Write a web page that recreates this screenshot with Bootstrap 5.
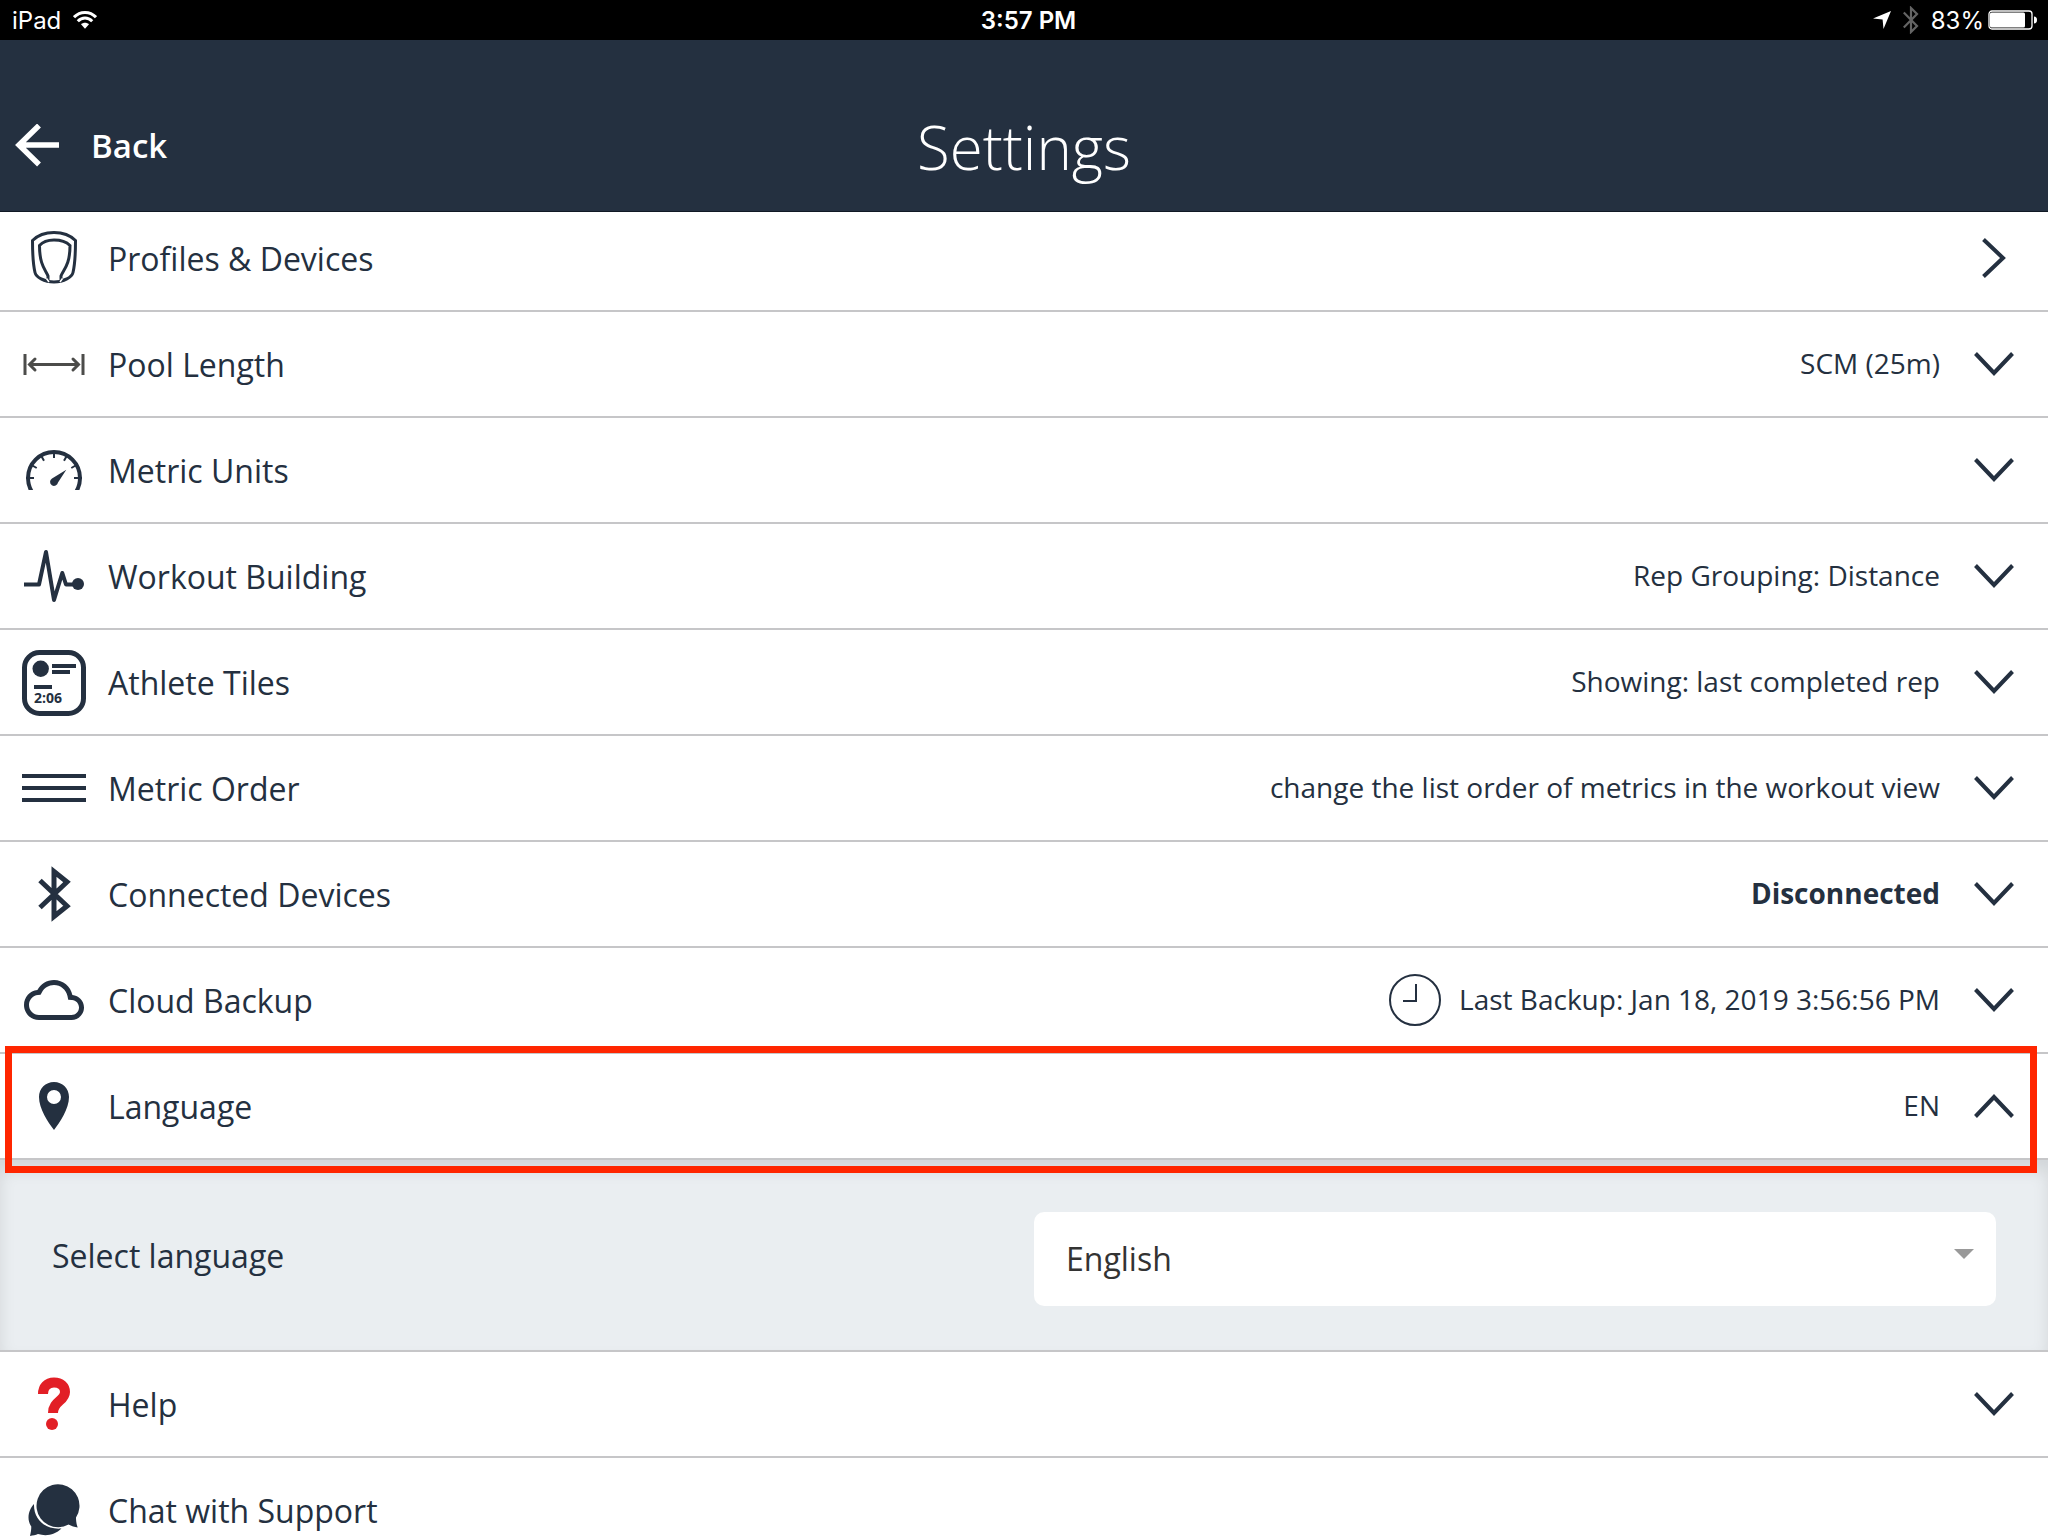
<!DOCTYPE html>
<html lang="en">
<head>
<meta charset="utf-8">
<meta name="viewport" content="width=device-width, initial-scale=1">
<title>Settings</title>
<link href="https://cdn.jsdelivr.net/npm/bootstrap@5.3.0/dist/css/bootstrap.min.css" rel="stylesheet">
<style>
  :root { --navy: #243040; --rule: #c6c6c8; }
  body { font-family: "Open Sans", sans-serif; font-size: 32px; line-height: 44px; color: var(--navy); }
  svg { display: block; flex: none; }

  .status-bar { height: 40px; padding: 0 11px 0 12px; font: 400 24px/40px Inter, sans-serif; }
  .status-bar > * { flex: 1 1 0; }
  .status-bar span, .clock-time { padding-top: 2px; }

  .app-header { height: 172px; padding-top: 40px; background: var(--navy); border-bottom: 1px solid #101924; }
  .app-header h1 { padding-top: 2px; font-size: 60px; font-weight: 300; line-height: 80px; }
  .back-btn { padding: 0 15px; gap: 32px; font-size: 33px; font-weight: 600; line-height: 48px; }
  .header-side { flex: 1 1 0; }

  .settings-scroll { min-height: 0; overflow-y: auto; scrollbar-width: none; }
  .settings-scroll::-webkit-scrollbar { display: none; }
  .settings-list { margin-top: -6px; --bs-list-group-border-color: var(--rule); --bs-list-group-color: var(--navy); --bs-list-group-action-color: var(--navy); }
  .settings-row { height: 106px; padding: 0 22px; gap: 22px; border-width: 0 0 2px !important; }
  .row-title { padding-top: 2px; }
  .row-value { padding-bottom: 2px; font-size: 28px; line-height: 40px; }
  .with-clock { gap: 18px; }

  .callout-frame { inset: -8px 11px -15px 5px; z-index: 3; border: 7px solid #ff2600; pointer-events: none; }

  .language-panel { background: #eaeef1; border-bottom: 2px solid var(--rule); box-shadow: inset 0 10px 16px rgba(0,0,0,.1); }
  .panel-label { padding: 2px 0 0 52px; }
  .panel-field { padding: 52px 52px 44px 10px; }
  .language-select { height: 94px; padding: 0 60px 0 32px; border: 0; border-radius: 10px; font-size: 32px; line-height: 44px; color: #333; background-color: #fff;
    background-image: url("data:image/svg+xml,%3csvg xmlns='http://www.w3.org/2000/svg' viewBox='0 0 20 10'%3e%3cpath fill='%23999' d='M0 0h20L10 10z'/%3e%3c/svg%3e");
    background-size: 20px 10px; background-position: right 22px top 37px; }
</style>
</head>
<body>
<svg width="0" height="0" class="position-absolute" aria-hidden="true">
  <symbol id="chev-down" viewBox="0 0 64 64"><path d="M13.500 21.500L32 41L50.500 21.500" fill="none" stroke="currentColor" stroke-width="4"/></symbol>
  <symbol id="chev-up" viewBox="0 0 64 64"><path d="M13.500 42.500L32 23L50.500 42.500" fill="none" stroke="currentColor" stroke-width="4"/></symbol>
  <symbol id="chev-right" viewBox="0 0 64 64"><path d="M21.500 13.500L41 32L21.500 50.500" fill="none" stroke="currentColor" stroke-width="4"/></symbol>
</svg>

<div class="vh-100 d-flex flex-column overflow-hidden bg-white">
  <div class="status-bar d-flex align-items-center bg-black text-white flex-shrink-0">
    <div class="d-flex align-items-center">
      <span class="pe-2 me-1">iPad</span>
      <svg width="24" height="20" viewBox="0 0 24 20" aria-hidden="true">
        <g fill="none" stroke="#fff" stroke-width="3"><path d="M1 7.200C7 .8 17 .8 23 7.200"/><path d="M4.800 11.300C9 7 15 7 19.200 11.300"/></g>
        <path fill="#fff" d="M8 14.200C10.400 12.200 13.600 12.200 16 14.200L12 18.800z"/>
      </svg>
    </div>
    <div class="clock-time ps-2 text-center fw-semibold">3:57 PM</div>
    <div class="d-flex align-items-center justify-content-end">
      <svg width="18" height="18" viewBox="0 0 18 18" aria-hidden="true"><path fill="#fff" d="M18 0L10.500 18L9.600 8.600L0 7.600z"/></svg>
      <svg class="mx-2" width="24" height="28" viewBox="-4 0 24 28" aria-hidden="true"><path fill="none" stroke="#646464" stroke-width="2.200" d="M.8 6.400L14 20L8 26V2L14 8L.8 21.600"/></svg>
      <span class="pe-1">83%</span>
      <svg width="49" height="20" viewBox="0 0 49 20" aria-hidden="true">
        <rect x="1" y="1" width="43" height="18" rx="3" fill="none" stroke="#fff" stroke-width="1.300"/>
        <rect x="2" y="2.500" width="35" height="15" rx="1.500" fill="#fff"/>
        <path fill="#fff" d="M46 6.500C48 6.500 49 8 49 10S48 13.500 46 13.500z"/>
      </svg>
    </div>
  </div>

  <header class="app-header d-flex align-items-center text-white flex-shrink-0">
    <div class="header-side">
      <button type="button" class="back-btn btn border-0 text-white d-flex align-items-center">
        <svg width="44" height="44" viewBox="0 1 44 44" aria-hidden="true"><path d="M24 2.500L4 22L24 41.500M4 22H44" fill="none" stroke="#fff" stroke-width="5.500"/></svg>
        <span>Back</span>
      </button>
    </div>
    <h1 class="m-0">Settings</h1>
    <div class="header-side"></div>
  </header>

  <main class="settings-scroll flex-grow-1">
    <div class="settings-list list-group list-group-flush">
      <a href="#profiles" class="settings-row list-group-item list-group-item-action d-flex align-items-center">
        <svg width="64" height="64" viewBox="0 0 64 64" fill="none" stroke="currentColor" stroke-width="3" aria-hidden="true">
          <path d="M10.500 14.500C16 9 23 6.500 32 6.500S48 9 53.500 14.500C53.500 26 53 38 51 46.500C50 51 42 56 32 56S14 51 13 46.500C11 38 10.500 26 10.500 14.500z"/>
          <path d="M26 55V50C24 44 17.500 40 17.500 19.500C21 15.500 26 14 32 14S44 15.500 48 19.500C48 40 41 44 39 50V55"/>
          <path d="M24.500 52.500L27 56M40.500 52.500L38 56" stroke="#fff" stroke-width="1.500"/>
        </svg>
        <span class="row-title flex-grow-1">Profiles &amp; Devices</span>
        <svg width="64" height="64" aria-hidden="true"><use href="#chev-right"/></svg>
      </a>

      <button type="button" class="settings-row list-group-item list-group-item-action d-flex align-items-center">
        <svg width="64" height="64" viewBox="0 0 64 64" fill="none" stroke="#4c4c4a" stroke-width="3" aria-hidden="true">
          <path d="M3 22V43M61 22V43M7 32.500H57"/><path d="M13 27L7.500 32.500L13 38M51 27L56.500 32.500L51 38" stroke-linecap="round"/>
        </svg>
        <span class="row-title flex-grow-1">Pool Length</span>
        <span class="row-value">SCM (25m)</span>
        <svg width="64" height="64" aria-hidden="true"><use href="#chev-down"/></svg>
      </button>

      <button type="button" class="settings-row list-group-item list-group-item-action d-flex align-items-center">
        <svg width="64" height="64" viewBox="0 0 64 64" aria-hidden="true">
          <clipPath id="dial-cut"><path d="M0 0H64V52H0z"/></clipPath>
          <g clip-path="url(#dial-cut)" fill="none" stroke="currentColor"><circle cx="32" cy="40" r="26" stroke-width="4"/>
          <path stroke-width="2" d="M4 40H12M52 40H60M32 13V20M9.500 27L14.700 30M54.500 27L49.300 30M19 17.500L22 22.700M45 17.500L42 22.700"/></g>
          <path fill="currentColor" d="M44.300 31.700L36 44.500A4 4 0 1 1 30 40.500z"/>
        </svg>
        <span class="row-title flex-grow-1">Metric Units</span>
        <svg width="64" height="64" aria-hidden="true"><use href="#chev-down"/></svg>
      </button>

      <button type="button" class="settings-row list-group-item list-group-item-action d-flex align-items-center">
        <svg width="64" height="64" viewBox="0 0 64 64" aria-hidden="true">
          <path d="M2 40.500H17L24 8L32 56L40.300 29L44 40.500H56" fill="none" stroke="currentColor" stroke-width="4" stroke-linejoin="round"/>
          <circle cx="56" cy="40" r="6" fill="currentColor"/>
        </svg>
        <span class="row-title flex-grow-1">Workout Building</span>
        <span class="row-value">Rep Grouping: Distance</span>
        <svg width="64" height="64" aria-hidden="true"><use href="#chev-down"/></svg>
      </button>

      <button type="button" class="settings-row list-group-item list-group-item-action d-flex align-items-center">
        <svg width="64" height="68" viewBox="0 -2 64 68" fill="currentColor" aria-hidden="true">
          <rect x="2.500" y="2.500" width="59" height="61" rx="15" fill="none" stroke="currentColor" stroke-width="5"/>
          <circle cx="18.700" cy="18.700" r="8.200"/>
          <path d="M30 14H54V18H30zM30 20H48V24H30zM12 35H30V39H12z"/>
          <text x="12" y="52.500" font-family="Open Sans" font-size="14" font-weight="700">2:06</text>
        </svg>
        <span class="row-title flex-grow-1">Athlete Tiles</span>
        <span class="row-value">Showing: last completed rep</span>
        <svg width="64" height="64" aria-hidden="true"><use href="#chev-down"/></svg>
      </button>

      <button type="button" class="settings-row list-group-item list-group-item-action d-flex align-items-center">
        <svg width="64" height="64" viewBox="0 0 64 64" fill="currentColor" aria-hidden="true"><path d="M0 18H64V22H0zM0 30H64V34H0zM0 42H64V46H0z"/></svg>
        <span class="row-title flex-grow-1">Metric Order</span>
        <span class="row-value">change the list order of metrics in the workout view</span>
        <svg width="64" height="64" aria-hidden="true"><use href="#chev-down"/></svg>
      </button>

      <button type="button" class="settings-row list-group-item list-group-item-action d-flex align-items-center">
        <svg width="64" height="64" viewBox="0 0 64 64" aria-hidden="true"><path d="M18 18.500L45 44L32 54.500V9.500L45 20L18 45.500" fill="none" stroke="currentColor" stroke-width="5"/></svg>
        <span class="row-title flex-grow-1">Connected Devices</span>
        <span class="row-value fw-bold">Disconnected</span>
        <svg width="64" height="64" aria-hidden="true"><use href="#chev-down"/></svg>
      </button>

      <button type="button" class="settings-row list-group-item list-group-item-action d-flex align-items-center">
        <svg width="64" height="64" viewBox="0 0 64 64" aria-hidden="true"><path transform="translate(2 2) scale(2.500)" fill="currentColor" d="M19.350 10.040C18.670 6.590 15.640 4 12 4 9.110 4 6.600 5.640 5.350 8.040 2.340 8.360 0 10.910 0 14c0 3.310 2.690 6 6 6h13c2.760 0 5-2.240 5-5 0-2.640-2.050-4.780-4.650-4.960zM19 18H6c-2.210 0-4-1.790-4-4 0-2.050 1.530-3.760 3.560-3.970l1.070-.11.5-.95C8.080 7.140 9.940 6 12 6c2.620 0 4.880 1.860 5.390 4.430l.3 1.500 1.530.11c1.560.1 2.780 1.410 2.780 2.960 0 1.650-1.350 3-3 3z"/></svg>
        <span class="row-title flex-grow-1">Cloud Backup</span>
        <span class="with-clock d-flex align-items-center">
          <svg width="52" height="52" viewBox="0 0 52 52" fill="none" stroke="currentColor" stroke-width="2" aria-hidden="true"><circle cx="26" cy="26" r="25"/><path d="M27 10V27H14"/></svg>
          <span class="row-value">Last Backup: Jan 18, 2019 3:56:56 PM</span>
        </span>
        <svg width="64" height="64" aria-hidden="true"><use href="#chev-down"/></svg>
      </button>

      <button type="button" aria-expanded="true" aria-controls="languagePanel" class="settings-row list-group-item list-group-item-action d-flex align-items-center position-relative z-1">
        <svg width="64" height="64" viewBox="0 0 64 64" aria-hidden="true"><path fill="currentColor" fill-rule="evenodd" d="M32 8C23.500 8 17 14.500 17 23C17 35 26 48 32 56C38 48 47 35 47 23C47 14.500 40.500 8 32 8zM32 16A7 7 0 1 1 32 30A7 7 0 1 1 32 16z"/></svg>
        <span class="row-title flex-grow-1">Language</span>
        <span class="row-value">EN</span>
        <svg width="64" height="64" aria-hidden="true"><use href="#chev-up"/></svg>
        <span class="callout-frame position-absolute"></span>
      </button>

      <div id="languagePanel" class="language-panel row g-0 align-items-center">
        <div class="col-6"><label for="languageSelect" class="panel-label d-block">Select language</label></div>
        <div class="panel-field col-6">
          <select id="languageSelect" class="language-select form-select">
            <option selected>English</option>
          </select>
        </div>
      </div>

      <button type="button" class="settings-row list-group-item list-group-item-action d-flex align-items-center">
        <svg width="64" height="64" viewBox="0 0 64 64" aria-hidden="true"><path d="M21 22C21 15 25 10.500 32 10.500S43 14.500 43 20C43 29 31 29 31 41" fill="none" stroke="#e21f26" stroke-width="10"/><circle cx="30" cy="52" r="6" fill="#e21f26"/></svg>
        <span class="row-title flex-grow-1">Help</span>
        <svg width="64" height="64" aria-hidden="true"><use href="#chev-down"/></svg>
      </button>

      <a href="#support" class="settings-row list-group-item list-group-item-action d-flex align-items-center">
        <svg width="64" height="64" viewBox="0 0 64 64" fill="currentColor" aria-hidden="true">
          <path d="M54 39.500C54 43 54.500 46.500 55.700 49.500C52.500 49 49.500 48.200 46.500 46.500A21.500 21.500 0 1 1 54 39.500z"/>
          <path d="M12 26C7 31 4 41 9.300 48.500C9.300 52 8.700 55 8 58C11 57.500 13.500 57 16 56C24 58.500 33 57 39.500 50.500C24 52 11.500 42 12 26z"/>
        </svg>
        <span class="row-title flex-grow-1">Chat with Support</span>
      </a>
    </div>
  </main>
</div>
<script src="https://cdn.jsdelivr.net/npm/bootstrap@5.3.0/dist/js/bootstrap.bundle.min.js"></script>
</body>
</html>
